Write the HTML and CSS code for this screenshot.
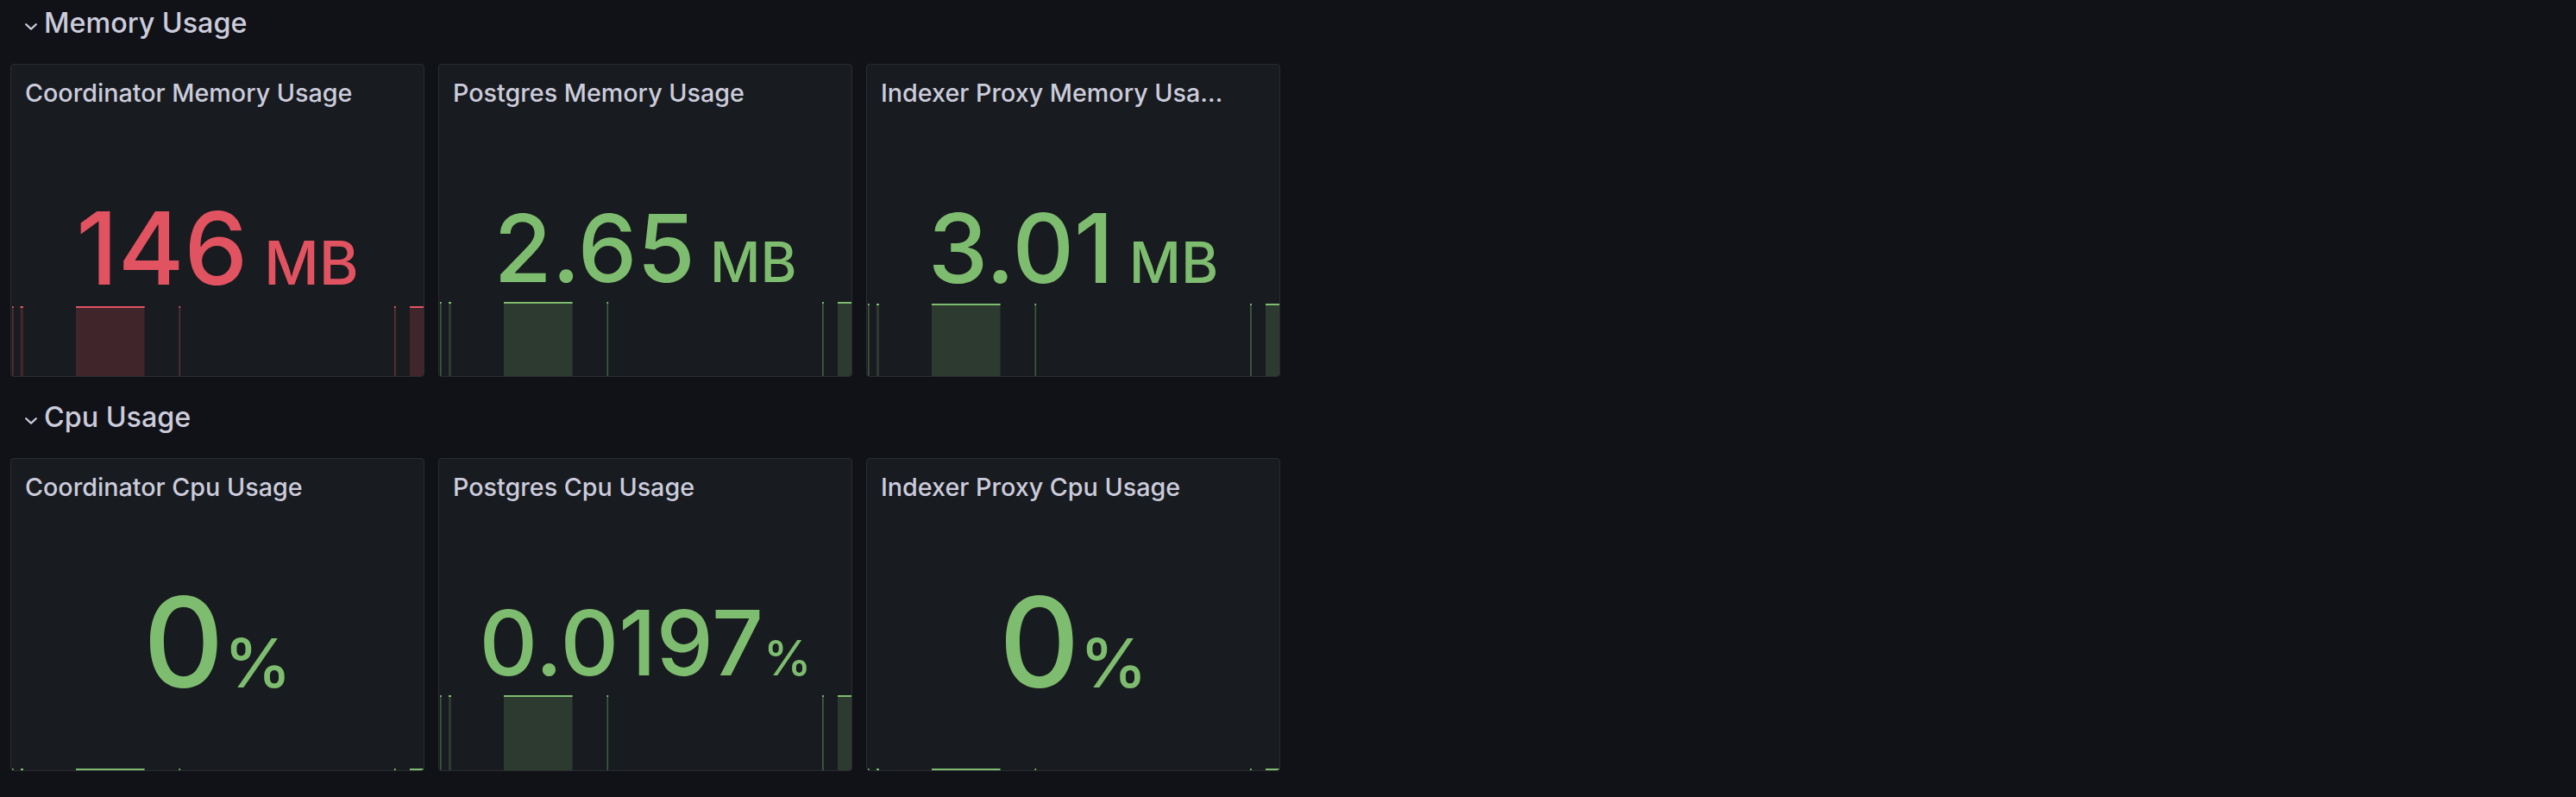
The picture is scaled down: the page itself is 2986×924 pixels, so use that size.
FILE: index.html
```html
<!DOCTYPE html>
<html lang="en">
<head>
<meta charset="utf-8">
<title>Dashboard</title>
<link rel="stylesheet" href="styles.css">
</head>
<body>
<div class="dashboard">
  <section class="row">
    <div class="row-header">
      <svg class="chevron" width="14" height="8" viewBox="0 0 14 8"><polyline points="1.2,1.2 7,6.6 12.8,1.2"/></svg>
      <span class="row-title">Memory Usage</span>
    </div>
    <div class="panels">
      <div class="panel red">
        <div class="panel-header"><h2 class="panel-title">Coordinator Memory Usage</h2></div>
        <div class="panel-body">
          <svg class="spark" width="478" height="81" viewBox="0 0 478 81">
            <rect class="thin" x="1" y="0" width="1.6" height="81"/><rect class="line" x="1" y="0" width="1.6" height="2"/>
            <rect class="fill" x="10.5" y="0" width="3.5" height="81"/><rect class="line" x="10.5" y="0" width="3.5" height="2"/>
            <rect class="fill" x="75" y="0" width="79.6" height="81"/><rect class="line" x="75" y="0" width="79.6" height="2"/>
            <rect class="thin" x="194.5" y="0" width="1.6" height="81"/><rect class="line" x="194.5" y="0" width="1.6" height="2"/>
            <rect class="thin" x="444" y="0" width="1.8" height="81"/><rect class="line" x="444" y="0" width="1.8" height="2"/>
            <rect class="fill" x="462" y="0" width="16" height="81"/><rect class="line" x="462" y="0" width="16" height="2"/>
          </svg>
          <div class="value" style="--vs:117px;--us:70px"><span class="num">146</span><span class="unit">&nbsp;MB</span></div>
        </div>
      </div>
      <div class="panel green">
        <div class="panel-header"><h2 class="panel-title">Postgres Memory Usage</h2></div>
        <div class="panel-body">
          <svg class="spark" width="478" height="86" viewBox="0 0 478 86">
            <rect class="thin" x="1" y="0" width="1.6" height="86"/><rect class="line" x="1" y="0" width="1.6" height="2"/>
            <rect class="fill" x="11" y="0" width="3" height="86"/><rect class="line" x="11" y="0" width="3" height="2"/>
            <rect class="fill" x="75" y="0" width="79.6" height="86"/><rect class="line" x="75" y="0" width="79.6" height="2"/>
            <rect class="thin" x="194.5" y="0" width="1.6" height="86"/><rect class="line" x="194.5" y="0" width="1.6" height="2"/>
            <rect class="thin" x="444" y="0" width="1.8" height="86"/><rect class="line" x="444" y="0" width="1.8" height="2"/>
            <rect class="fill" x="462" y="0" width="16" height="86"/><rect class="line" x="462" y="0" width="16" height="2"/>
          </svg>
          <div class="value" style="--vs:109px;--us:64px"><span class="num">2.65</span><span class="unit">&nbsp;MB</span></div>
        </div>
      </div>
      <div class="panel green">
        <div class="panel-header"><h2 class="panel-title">Indexer Proxy Memory Usage</h2></div>
        <div class="panel-body">
          <svg class="spark" width="478" height="84" viewBox="0 0 478 84">
            <rect class="thin" x="1" y="0" width="1.6" height="84"/><rect class="line" x="1" y="0" width="1.6" height="2"/>
            <rect class="fill" x="11" y="0" width="3" height="84"/><rect class="line" x="11" y="0" width="3" height="2"/>
            <rect class="fill" x="75" y="0" width="79.6" height="84"/><rect class="line" x="75" y="0" width="79.6" height="2"/>
            <rect class="thin" x="194.5" y="0" width="1.6" height="84"/><rect class="line" x="194.5" y="0" width="1.6" height="2"/>
            <rect class="thin" x="444" y="0" width="1.8" height="84"/><rect class="line" x="444" y="0" width="1.8" height="2"/>
            <rect class="fill" x="462" y="0" width="16" height="84"/><rect class="line" x="462" y="0" width="16" height="2"/>
          </svg>
          <div class="value" style="--vs:111px;--us:66px"><span class="num">3.01</span><span class="unit">&nbsp;MB</span></div>
        </div>
      </div>
    </div>
  </section>

  <section class="row">
    <div class="row-header">
      <svg class="chevron" width="14" height="8" viewBox="0 0 14 8"><polyline points="1.2,1.2 7,6.6 12.8,1.2"/></svg>
      <span class="row-title">Cpu Usage</span>
    </div>
    <div class="panels">
      <div class="panel green">
        <div class="panel-header"><h2 class="panel-title">Coordinator Cpu Usage</h2></div>
        <div class="panel-body">
          <svg class="spark" width="478" height="2" viewBox="0 0 478 2">
            <rect class="line" x="1" y="0" width="1.6" height="2"/>
            <rect class="line" x="11" y="0" width="3" height="2"/>
            <rect class="line" x="75" y="0" width="79.6" height="2"/>
            <rect class="line" x="194.5" y="0" width="1.6" height="2"/>
            <rect class="line" x="444" y="0" width="1.8" height="2"/>
            <rect class="line" x="462" y="0" width="16" height="2"/>
          </svg>
          <div class="value" style="--vs:145px;--us:79px"><span class="num">0</span><span class="unit">%</span></div>
        </div>
      </div>
      <div class="panel green">
        <div class="panel-header"><h2 class="panel-title">Postgres Cpu Usage</h2></div>
        <div class="panel-body">
          <svg class="spark" width="478" height="87" viewBox="0 0 478 87">
            <rect class="thin" x="1" y="0" width="1.6" height="87"/><rect class="line" x="1" y="0" width="1.6" height="2"/>
            <rect class="fill" x="11" y="0" width="3" height="87"/><rect class="line" x="11" y="0" width="3" height="2"/>
            <rect class="fill" x="75" y="0" width="79.6" height="87"/><rect class="line" x="75" y="0" width="79.6" height="2"/>
            <rect class="thin" x="194.5" y="0" width="1.6" height="87"/><rect class="line" x="194.5" y="0" width="1.6" height="2"/>
            <rect class="thin" x="444" y="0" width="1.8" height="87"/><rect class="line" x="444" y="0" width="1.8" height="2"/>
            <rect class="fill" x="462" y="0" width="16" height="87"/><rect class="line" x="462" y="0" width="16" height="2"/>
          </svg>
          <div class="value" style="--vs:105px;--us:56px"><span class="num">0.0197</span><span class="unit">%</span></div>
        </div>
      </div>
      <div class="panel green">
        <div class="panel-header"><h2 class="panel-title">Indexer Proxy Cpu Usage</h2></div>
        <div class="panel-body">
          <svg class="spark" width="478" height="2" viewBox="0 0 478 2">
            <rect class="line" x="1" y="0" width="1.6" height="2"/>
            <rect class="line" x="11" y="0" width="3" height="2"/>
            <rect class="line" x="75" y="0" width="79.6" height="2"/>
            <rect class="line" x="194.5" y="0" width="1.6" height="2"/>
            <rect class="line" x="444" y="0" width="1.8" height="2"/>
            <rect class="line" x="462" y="0" width="16" height="2"/>
          </svg>
          <div class="value" style="--vs:145px;--us:79px"><span class="num">0</span><span class="unit">%</span></div>
        </div>
      </div>
    </div>
  </section>
</div>
</body>
</html>
```

FILE: styles.css
```css
html, body {
  margin: 0;
  padding: 0;
  background: #111217;
}
body {
  font-family: "Inter", "Noto Sans", "Liberation Sans", sans-serif;
  color: #ccccdc;
  width: 2986px;
  height: 924px;
  overflow: hidden;
}
.dashboard {
  display: flex;
  flex-direction: column;
  gap: 16px;
  padding: 0 12px;
  margin-top: -4px;
}
.row {
  display: flex;
  flex-direction: column;
  gap: 16px;
}
.row-header {
  height: 62px;
  display: flex;
  align-items: center;
  padding-left: 17px;
  gap: 8px;
}
.chevron {
  flex: none;
  margin-top: 7px;
}
.chevron polyline {
  fill: none;
  stroke: #ccccdc;
  stroke-width: 2.2;
  stroke-linecap: round;
  stroke-linejoin: round;
}
.row-title {
  font-size: 32.3px;
  font-weight: 500;
  line-height: 1;
  color: #ccccdc;
}
.panels {
  display: grid;
  grid-template-columns: repeat(3, 480px);
  gap: 16px;
}
.panel {
  height: 363px;
  box-sizing: border-box;
  background: #181b1f;
  border: 1px solid #2a2c32;
  border-radius: 4px;
  display: flex;
  flex-direction: column;
  overflow: hidden;
}
.panel.red {
  --line: #e15360;
  --fill: #40262b;
  --thin: #5a2f35;
  --text: #e15360;
}
.panel.green {
  --line: #7ebd6f;
  --fill: #2d3a30;
  --thin: #3d5a3e;
  --text: #7ebd6f;
}
.panel-header {
  height: 64px;
  flex: none;
  box-sizing: border-box;
  padding: 2px 63px 0 16px;
  display: flex;
  align-items: center;
}
.panel-title {
  margin: 0;
  font-size: 28.7px;
  font-weight: 500;
  line-height: 1.2;
  color: #ccccdc;
  white-space: nowrap;
  overflow: hidden;
  text-overflow: ellipsis;
}
.panel-body {
  flex: 1;
  display: grid;
  grid-template: 1fr / 1fr;
  min-height: 0;
}
.spark {
  grid-area: 1 / 1;
  align-self: end;
  display: block;
}
.spark .fill { fill: var(--fill); }
.spark .thin { fill: var(--thin); }
.spark .line { fill: var(--line); }
.value {
  grid-area: 1 / 1;
  align-self: center;
  justify-self: center;
  display: flex;
  align-items: baseline;
  color: var(--text);
  font-weight: 500;
  white-space: nowrap;
}
.num {
  font-size: var(--vs);
  line-height: 1;
}
.unit {
  font-size: var(--us);
  line-height: 1;
}
```
